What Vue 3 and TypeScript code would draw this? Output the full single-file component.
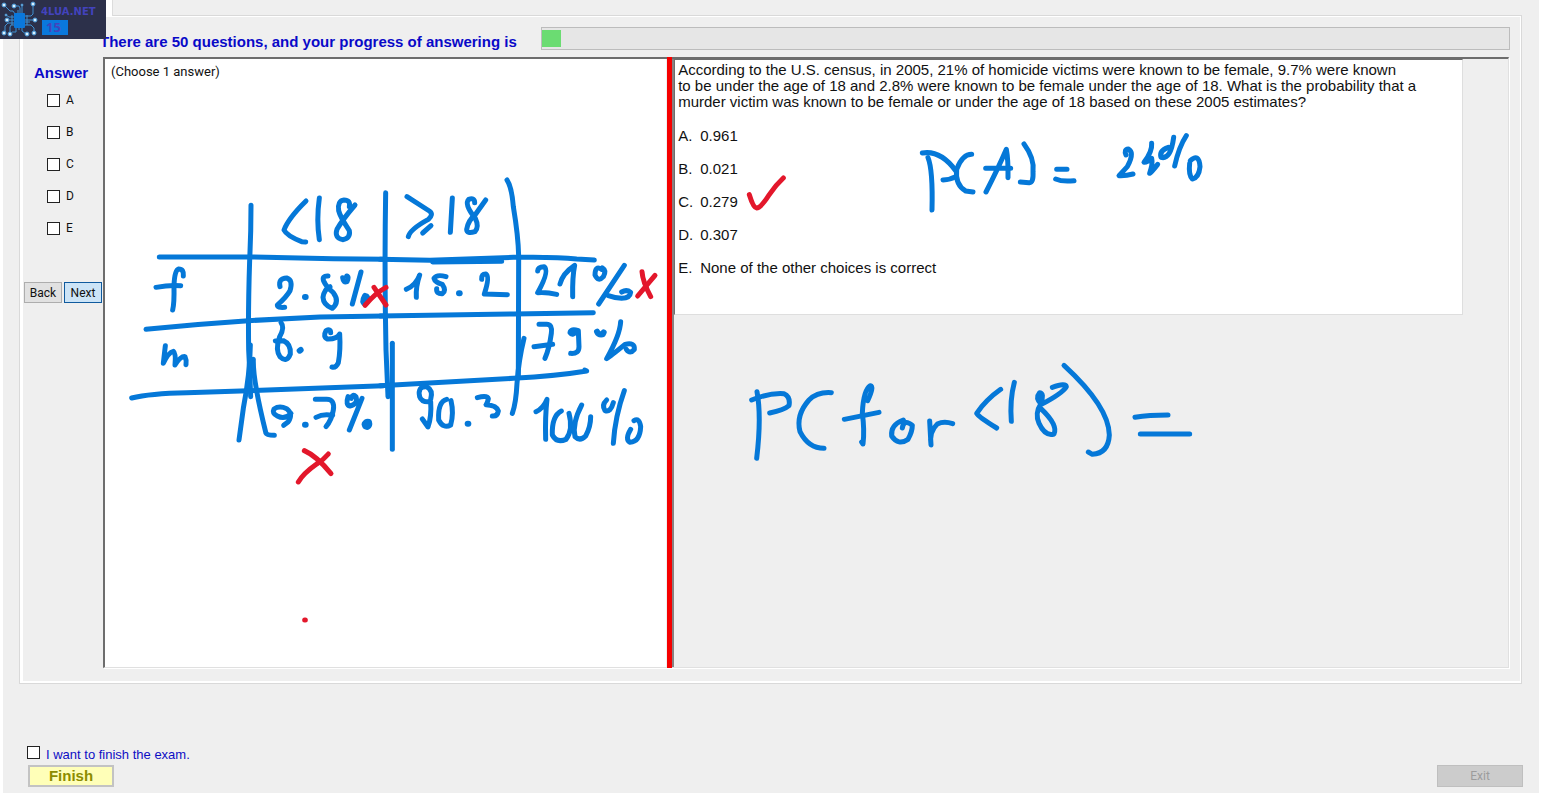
<script setup lang="ts">
import { ref } from 'vue'

interface Stroke {
  d: string
  tone?: 'red'
  wide?: boolean
}
interface Note {
  x: number
  y: number
  strokes: Stroke[]
}

const letters = ['A', 'B', 'C', 'D', 'E']
const picked = ref<string[]>([])
const wantsFinish = ref(false)

const questionLines = [
  'According to the U.S. census, in 2005, 21% of homicide victims were known to be female, 9.7% were known',
  'to be under the age of 18 and 2.8% were known to be female under the age of 18. What is the probability that a',
  'murder victim was known to be female or under the age of 18 based on these 2005 estimates?',
]
const choices = [
  { key: 'A.', text: '0.961' },
  { key: 'B.', text: '0.021' },
  { key: 'C.', text: '0.279' },
  { key: 'D.', text: '0.307' },
  { key: 'E.', text: 'None of the other choices is correct' },
]

// Pen strokes are stored at three times their drawn size, relative to each note's origin.
const tableNotes: Note[] = [
  {
    x: 120,
    y: 170,
    strokes: [
      { d: 'M393 106 Q393 190 389 270 Q384 420 386 540 L389 600 L392 680' },
      { d: 'M797 68 Q794 250 796 420 L798 540 L804 680' },
      { d: 'M118 261 H390 L640 266 L795 268' },
      { d: 'M78 478 Q230 462 385 452 L600 441 L790 438' },
      { d: 'M558 93 Q505 145 492 180 Q500 197 545 215 L557 216' },
      { d: 'M598 84 Q589 150 598 209' },
      { d: 'M688 110 Q692 90 672 90 Q652 92 656 122 Q660 140 688 182 Q692 205 668 209 Q642 203 651 178 Q668 148 705 105' },
      { d: 'M190 318 Q192 297 176 297 Q163 300 162 350 Q163 400 158 420' },
      { d: 'M108 352 Q150 344 182 347' },
      { d: 'M480 350 Q474 325 500 324 Q520 330 510 362 Q500 380 472 405 Q472 414 494 412' },
      { d: 'M555 381 h2', wide: true },
      { d: 'M624 318 Q605 317 611 333 Q618 350 640 368 Q660 395 637 415 Q610 405 609 382 Q612 358 630 350' },
      { d: 'M668 323 Q670 339 681 335 Q688 320 680 318' },
      { d: 'M723 306 L697 402' },
      { d: 'M735 378 Q725 395 735 402 Q748 390 740 380', wide: true },
      { d: 'M762 352 L798 405', tone: 'red' },
      { d: 'M798 352 Q765 370 735 406', tone: 'red' },
    ],
  },
  {
    x: 120,
    y: 330,
    strokes: [
      { d: 'M817 40 V358' },
      { d: 'M400 88 Q398 150 438 310 Q440 316 463 316' },
      { d: 'M391 45 Q390 130 370 235 L357 330' },
      { d: 'M136 47 L130 100 Q145 67 160 64 Q168 70 165 105 Q182 78 195 80 Q200 90 198 104' },
      { d: 'M483 -22 Q495 -8 479 20 Q465 60 480 80 Q500 100 511 72 Q513 42 490 32 L466 33' },
      { d: 'M539 62 L542 60', wide: true },
      { d: 'M632 8 Q632 -5 618 2 Q608 20 622 27 Q650 28 659 12 Q662 60 655 98 Q648 114 636 111' },
      { d: 'M35 204 Q90 190 200 188 L385 182 L790 167' },
      { d: 'M513 250 Q495 270 472 258 Q455 250 462 237 Q478 226 500 236 Q520 252 505 275 L491 286' },
      { d: 'M555 284 h2', wide: true },
      { d: 'M586 208 H620 Q645 208 640 240 Q635 270 618 290 M588 262 Q610 250 638 256' },
      { d: 'M684 200 Q676 225 690 228 Q715 222 708 200 Q698 190 694 205 M726 205 Q712 240 688 300' },
      { d: 'M734 282 Q738 274 747 276 Q750 286 742 291 Q734 290 734 282', wide: true },
      { d: 'M553 362 Q590 378 633 431', tone: 'red' },
      { d: 'M625 372 Q610 390 590 402 Q550 430 535 456', tone: 'red' },
    ],
  },
  {
    x: 380,
    y: 170,
    strokes: [
      { d: 'M0 268 L150 271 L400 262 H460 Q540 263 590 267 L643 270' },
      { d: 'M158 276 L365 274' },
      { d: 'M0 438 L400 432 L640 428' },
      { d: 'M381 30 Q395 50 400 110 Q415 200 416 260 L415 620' },
      { d: 'M81 80 L148 123 Q162 133 145 148 Q90 178 85 200' },
      { d: 'M153 167 L128 189' },
      { d: 'M217 84 L211 187' },
      { d: 'M284 98 Q284 82 266 88 Q252 103 286 145 Q298 170 285 185 Q260 193 260 178 Q265 150 285 135 L317 90' },
      { d: 'M79 358 Q108 345 119 315 Q107 350 109 382' },
      { d: 'M198 320 Q170 312 162 325 Q165 337 187 343 Q200 362 187 371 Q168 372 170 356' },
      { d: 'M237 370 h2', wide: true },
      { d: 'M305 328 Q304 311 318 312 Q330 320 313 372 L382 374' },
      { d: 'M473 303 Q474 290 492 290 Q510 302 473 368 Q500 366 530 373' },
      { d: 'M540 342 Q548 310 584 286 Q577 320 578 380' },
      { d: 'M665 298 Q645 285 645 315 Q655 337 670 320 Q680 302 667 294' },
      { d: 'M733 286 L656 402' },
      { d: 'M685 377 Q705 384 725 385 Q750 385 752 367 Q740 357 725 366' },
      { d: 'M786 305 Q788 335 812 380', tone: 'red' },
      { d: 'M825 316 L773 378', tone: 'red' },
    ],
  },
  {
    x: 380,
    y: 330,
    strokes: [
      { d: 'M0 167 L400 145 Q530 138 620 123 L614 120' },
      { d: 'M432 25 Q416 90 411 160 Q408 220 397 250' },
      { d: 'M477 -17 H500 Q518 -17 514 10 Q508 55 495 85 M462 50 L518 43' },
      { d: 'M592 2 Q578 20 570 8 Q572 -5 595 2 L597 50 Q597 72 572 70' },
      { d: 'M651 5 Q655 15 668 13 L671 7', wide: true },
      { d: 'M722 -25 Q720 15 680 86 Q690 80 735 43 Q765 36 763 58 Q750 74 739 58' },
      { d: 'M152 208 Q160 180 140 170 Q112 168 119 200 Q125 218 152 215 Q155 260 144 291 L127 267' },
      { d: 'M200 208 Q173 215 176 270 Q190 297 212 285 Q222 250 213 212' },
      { d: 'M263 281 h2', wide: true },
      { d: 'M292 203 Q322 195 325 206 Q322 220 318 224 Q350 225 355 243 Q352 260 337 258' },
      { d: 'M468 245 Q490 235 501 208 Q495 260 497 328' },
      { d: 'M544 243 Q515 258 517 315 Q530 340 558 328 Q580 300 567 250' },
      { d: 'M605 225 Q576 280 585 320 Q600 335 617 318 Q632 290 632 260' },
      { d: 'M680 210 Q664 225 675 242 Q692 248 700 218' },
      { d: 'M733 182 Q705 260 700 340' },
      { d: 'M752 298 Q734 328 750 337 Q780 335 782 290 Q778 262 762 272' },
    ],
  },
  { x: 305, y: 620, strokes: [{ d: 'M-1 0 h2', tone: 'red' }] },
]

const formulaNotes: Note[] = [
  {
    x: 660,
    y: 50,
    strokes: [{ d: 'M271 434 Q283 473 293 474 Q305 474 330 435 Q350 405 373 384', tone: 'red' }],
  },
  {
    x: 900,
    y: 120,
    strokes: [
      { d: 'M70 99 Q125 90 170 152' },
      { d: 'M87 113 Q102 150 99 270' },
      { d: 'M132 180 Q155 179 170 170' },
      { d: 'M218 103 Q190 103 173 148 Q168 195 200 213 L222 216' },
      { d: 'M261 216 Q300 140 322 88 Q328 120 327 173 M260 145 H335' },
      { d: 'M375 72 Q407 115 402 155 Q404 190 390 188 L364 186' },
      { d: 'M473 148 H504 M470 177 Q490 186 525 182' },
      { d: 'M681 105 Q674 88 688 87 Q708 98 685 140 L660 167 Q680 168 702 162' },
      { d: 'M758 70 Q760 95 735 127 Q745 128 758 115 Q762 130 752 160 Q757 157 776 133' },
      { d: 'M808 82 Q780 92 786 112 Q815 120 824 52' },
      { d: 'M862 47 Q840 80 827 138' },
      { d: 'M874 122 Q900 98 903 140 Q900 172 880 177 Q868 165 872 130' },
    ],
  },
  {
    x: 730,
    y: 350,
    strokes: [
      { d: 'M84 125 Q98 200 83 325' },
      { d: 'M68 150 Q120 128 165 131 Q185 140 180 167 Q165 180 122 189' },
      { d: 'M307 128 Q265 125 240 150 Q200 195 213 245 Q238 295 285 295' },
      { d: 'M416 152 Q436 110 424 107 Q403 120 400 190 Q407 240 402 282 L398 276' },
      { d: 'M346 208 L450 187' },
      { d: 'M523 210 Q484 225 488 258 Q508 288 537 268 Q550 245 550 226 Q525 205 520 234' },
      { d: 'M602 213 L606 285 Q600 245 625 222 Q645 212 671 221' },
      { d: 'M815 118 Q770 150 743 190 Q748 200 803 234' },
      { d: 'M856 97 Q842 150 847 214' },
      { d: 'M970 112 Q1010 98 1012 110 Q1000 130 937 163 Q918 145 932 128 Q947 130 935 162 Q917 190 930 220 Q948 260 975 252 Q988 225 935 175' },
      { d: 'M1005 46 Q1140 170 1141 255 Q1138 310 1090 313 L1078 306' },
      { d: 'M1218 202 Q1260 195 1317 195 M1234 252 H1382' },
    ],
  },
]
</script>

<template>
  <div class="shell">
    <div class="logo">
      <svg class="chip" width="38" height="38" viewBox="0 0 38 38" aria-hidden="true">
        <path
          class="traces"
          d="M4 5L10 11H13L15 14M14 6H19L20 8V13M22 5V13M18 13V10M33 5V14L31 16H25M6 15L9 17H14M7 20H14M14 23H8L5 26V32M14 25H11L10 27V33M16 27V32H12M19 27V30M22 27V31L26 34M25 25H31L34 28V32M25 20H34M25 22H30M27 15V25M12 15V25"
        />
        <rect class="core" x="14" y="13" width="11" height="15" rx="1" />
        <g class="nodes">
          <circle cx="4" cy="5" r="2" /><circle cx="14" cy="6" r="2" /><circle cx="22" cy="5" r="1" />
          <circle cx="33" cy="4" r="2" /><circle cx="6" cy="15" r="1" /><circle cx="7" cy="20" r="2" />
          <circle cx="35" cy="20" r="2" /><circle cx="4" cy="33" r="2" /><circle cx="10" cy="34" r="2" />
          <circle cx="27" cy="34" r="2" /><circle cx="34" cy="33" r="2" />
        </g>
      </svg>
      <div class="brand">
        <strong>4LUA.NET</strong>
        <span>15</span>
      </div>
    </div>

    <main class="frame">
      <header class="top">
        <h1 id="progress-label">There are 50 questions, and your progress of answering is</h1>
        <div class="progress" role="progressbar" aria-labelledby="progress-label" aria-valuenow="1" aria-valuemax="50">
          <div class="filled"></div>
        </div>
      </header>

      <div class="work">
        <aside class="side">
          <h2>Answer</h2>
          <div class="options">
            <label v-for="l in letters" :key="l">
              <input v-model="picked" type="checkbox" :value="l" />{{ l }}
            </label>
          </div>
          <div class="nav">
            <button type="button">Back</button>
            <button type="button" class="next">Next</button>
          </div>
        </aside>

        <div class="panes">
          <section class="sheet">
            <p>(Choose 1 answer)</p>
            <svg class="ink" width="562" height="608" viewBox="105 59 562 608" aria-hidden="true">
              <g v-for="(n, i) in tableNotes" :key="i" :transform="`translate(${n.x} ${n.y}) scale(${1 / 3})`">
                <path v-for="(s, j) in n.strokes" :key="j" :d="s.d" :class="[s.tone, { wide: s.wide }]" />
              </g>
            </svg>
          </section>
          <div class="splitter"></div>
          <section class="detail">
            <div class="question">
              <p><template v-for="(line, i) in questionLines" :key="i">{{ line }}<br /></template></p>
              <ul>
                <li v-for="c in choices" :key="c.key"><span>{{ c.key }}</span>{{ c.text }}</li>
              </ul>
            </div>
            <svg class="ink" width="832" height="608" viewBox="675 59 832 608" aria-hidden="true">
              <g v-for="(n, i) in formulaNotes" :key="i" :transform="`translate(${n.x} ${n.y}) scale(${1 / 3})`">
                <path v-for="(s, j) in n.strokes" :key="j" :d="s.d" :class="[s.tone, { wide: s.wide }]" />
              </g>
            </svg>
          </section>
        </div>
      </div>
    </main>

    <footer class="foot">
      <div>
        <label><input v-model="wantsFinish" type="checkbox" />I want to finish the exam.</label>
        <button type="button" class="finish">Finish</button>
      </div>
      <button type="button" class="exit" disabled>Exit</button>
    </footer>
  </div>
</template>

<style>
body {
  margin: 0;
  background: #fff;
}
</style>

<style scoped>
* {
  box-sizing: border-box;
}
h1, h2, p, ul {
  margin: 0;
  padding: 0;
}
.shell {
  position: relative;
  display: flex;
  flex-direction: column;
  min-height: calc(100vh - 3px);
  margin: 0 3px;
  padding: 15px 16px 6px;
  background: #efefef;
  color: #111;
  font-family: "Liberation Sans", Arial, sans-serif;
}
.logo {
  position: absolute;
  z-index: 3;
  top: 0;
  left: -3px;
  display: flex;
  width: 106px;
  height: 39px;
  background: #2c304a;
}
.logo::after {
  content: "";
  position: absolute;
  left: 106px;
  top: 0;
  width: 6px;
  height: 16px;
  background: #fff;
  border-right: 1px solid #dcdcdc;
}
.traces {
  fill: none;
  stroke: #3f8fd0;
  stroke-width: 1;
}
.core {
  fill: #0a78dc;
}
.nodes {
  fill: #d8f0ff;
  stroke: #3f8fd0;
}
.brand {
  padding: 5px 0 0 3px;
  color: #4343bd;
  font-family: "DejaVu Sans", Verdana, sans-serif;
  font-weight: bold;
}
.brand strong {
  display: block;
  font-size: 10px;
  line-height: 13px;
}
.brand span {
  display: block;
  width: 26px;
  margin: 2px 0 0 1px;
  background: #0a78dc;
  font-family: "Open Sans", sans-serif;
  font-size: 13px;
  line-height: 15px;
  padding-left: 4px;
}
.frame {
  display: flex;
  flex-direction: column;
  flex: 1;
  margin-right: 1px;
  padding: 11px 11px 15px 4px;
  border: 1px solid #d9d9d9;
  box-shadow: inset 3px 0 #fff, inset -1px -2px #fff, inset 0 1px #fff;
}
.top {
  display: flex;
  align-items: center;
  height: 23px;
  margin-bottom: 7px;
}
h1 {
  width: 441px;
  margin-left: 76px;
  padding-top: 7px;
  flex: none;
  color: #0909c8;
  font-size: 15px;
  line-height: 18px;
}
.progress {
  flex: 1;
  height: 23px;
  padding: 2px 0;
  border: 1px solid #bcbcbc;
  background: #e6e6e6;
}
.filled {
  width: 2%;
  height: 100%;
  background: #6bdc72;
}
.work {
  display: flex;
  flex: 1;
}
.side {
  width: 79px;
  flex: none;
  padding-top: 7px;
}
h2 {
  padding-left: 10px;
  color: #0909c8;
  font-size: 15px;
  line-height: 18px;
}
.options {
  display: flex;
  flex-direction: column;
  gap: 16px;
  padding: 10px 0 0 23px;
  font-family: Roboto, sans-serif;
  font-size: 12px;
  line-height: 16px;
}
label {
  display: flex;
  align-items: center;
}
input {
  appearance: none;
  flex: none;
  width: 13px;
  height: 13px;
  margin: 0 6px 0 0;
  border: 1px solid #222;
  background: #fff;
}
input:checked {
  background: #333;
}
.nav {
  display: flex;
  gap: 2px;
  padding-top: 46px;
}
button {
  padding: 0;
  border: 1px solid #adadad;
  background: #e1e1e1;
  color: #111;
  font-family: Roboto, sans-serif;
  font-size: 12px;
}
.nav button {
  width: 38px;
  height: 21px;
}
.nav .next {
  border-color: #0f5a9e;
  background: #cce4f7;
}
.panes {
  display: flex;
  flex: 1;
  margin-right: 1px;
  border: 1px solid #e0e0e0;
  border-top: 2px solid #6d6d6d;
  border-left: 2px solid #6d6d6d;
  box-shadow: 1px 1px #fff;
}
.sheet {
  position: relative;
  flex: 0 0 40%;
  padding: 4px 6px;
  background: #fff;
  font-family: Roboto, sans-serif;
  font-size: 13px;
  line-height: 18px;
}
.splitter {
  width: 5px;
  flex: none;
  margin: -2px 0 -1px 1px;
  background: #f60000;
}
.detail {
  position: relative;
  flex: 1;
  border-left: 2px solid #8a8080;
}
.question {
  width: 789px;
  max-width: 100%;
  min-height: 256px;
  padding: 2px 0 36px 3px;
  border: 1px solid #dedede;
  border-top-color: #6d6d6d;
  border-left-color: #6d6d6d;
  background: #fff;
  font-size: 15px;
  line-height: 16px;
}
ul {
  display: flex;
  flex-direction: column;
  gap: 16px;
  margin-top: 17px;
  list-style: none;
  line-height: 17px;
}
li {
  display: flex;
}
li span {
  width: 22px;
}
.ink {
  position: absolute;
  top: 0;
  left: 0;
  pointer-events: none;
}
.ink path {
  fill: none;
  stroke: #0578d8;
  stroke-width: 15;
  stroke-linecap: round;
  stroke-linejoin: round;
}
.ink .wide {
  stroke-width: 18;
}
.ink .red {
  stroke: #e3172b;
}
.foot {
  display: flex;
  justify-content: space-between;
  align-items: flex-end;
  padding: 62px 0 0 9px;
}
.foot label {
  align-items: flex-start;
  margin: 0 0 2px -1px;
  color: #0d0dc4;
  font-size: 13px;
  line-height: 17px;
}
.foot button {
  display: block;
  width: 86px;
  height: 22px;
}
.foot .finish {
  border: 2px solid #c3c3c3;
  background: #ffffb8;
  color: #8c8c00;
  font-family: "Liberation Sans", Arial, sans-serif;
  font-size: 15px;
  line-height: 18px;
  font-weight: bold;
}
.foot .exit {
  border-color: #bfbfbf;
  background: #ccc;
  color: #9c9c9c;
}
</style>
